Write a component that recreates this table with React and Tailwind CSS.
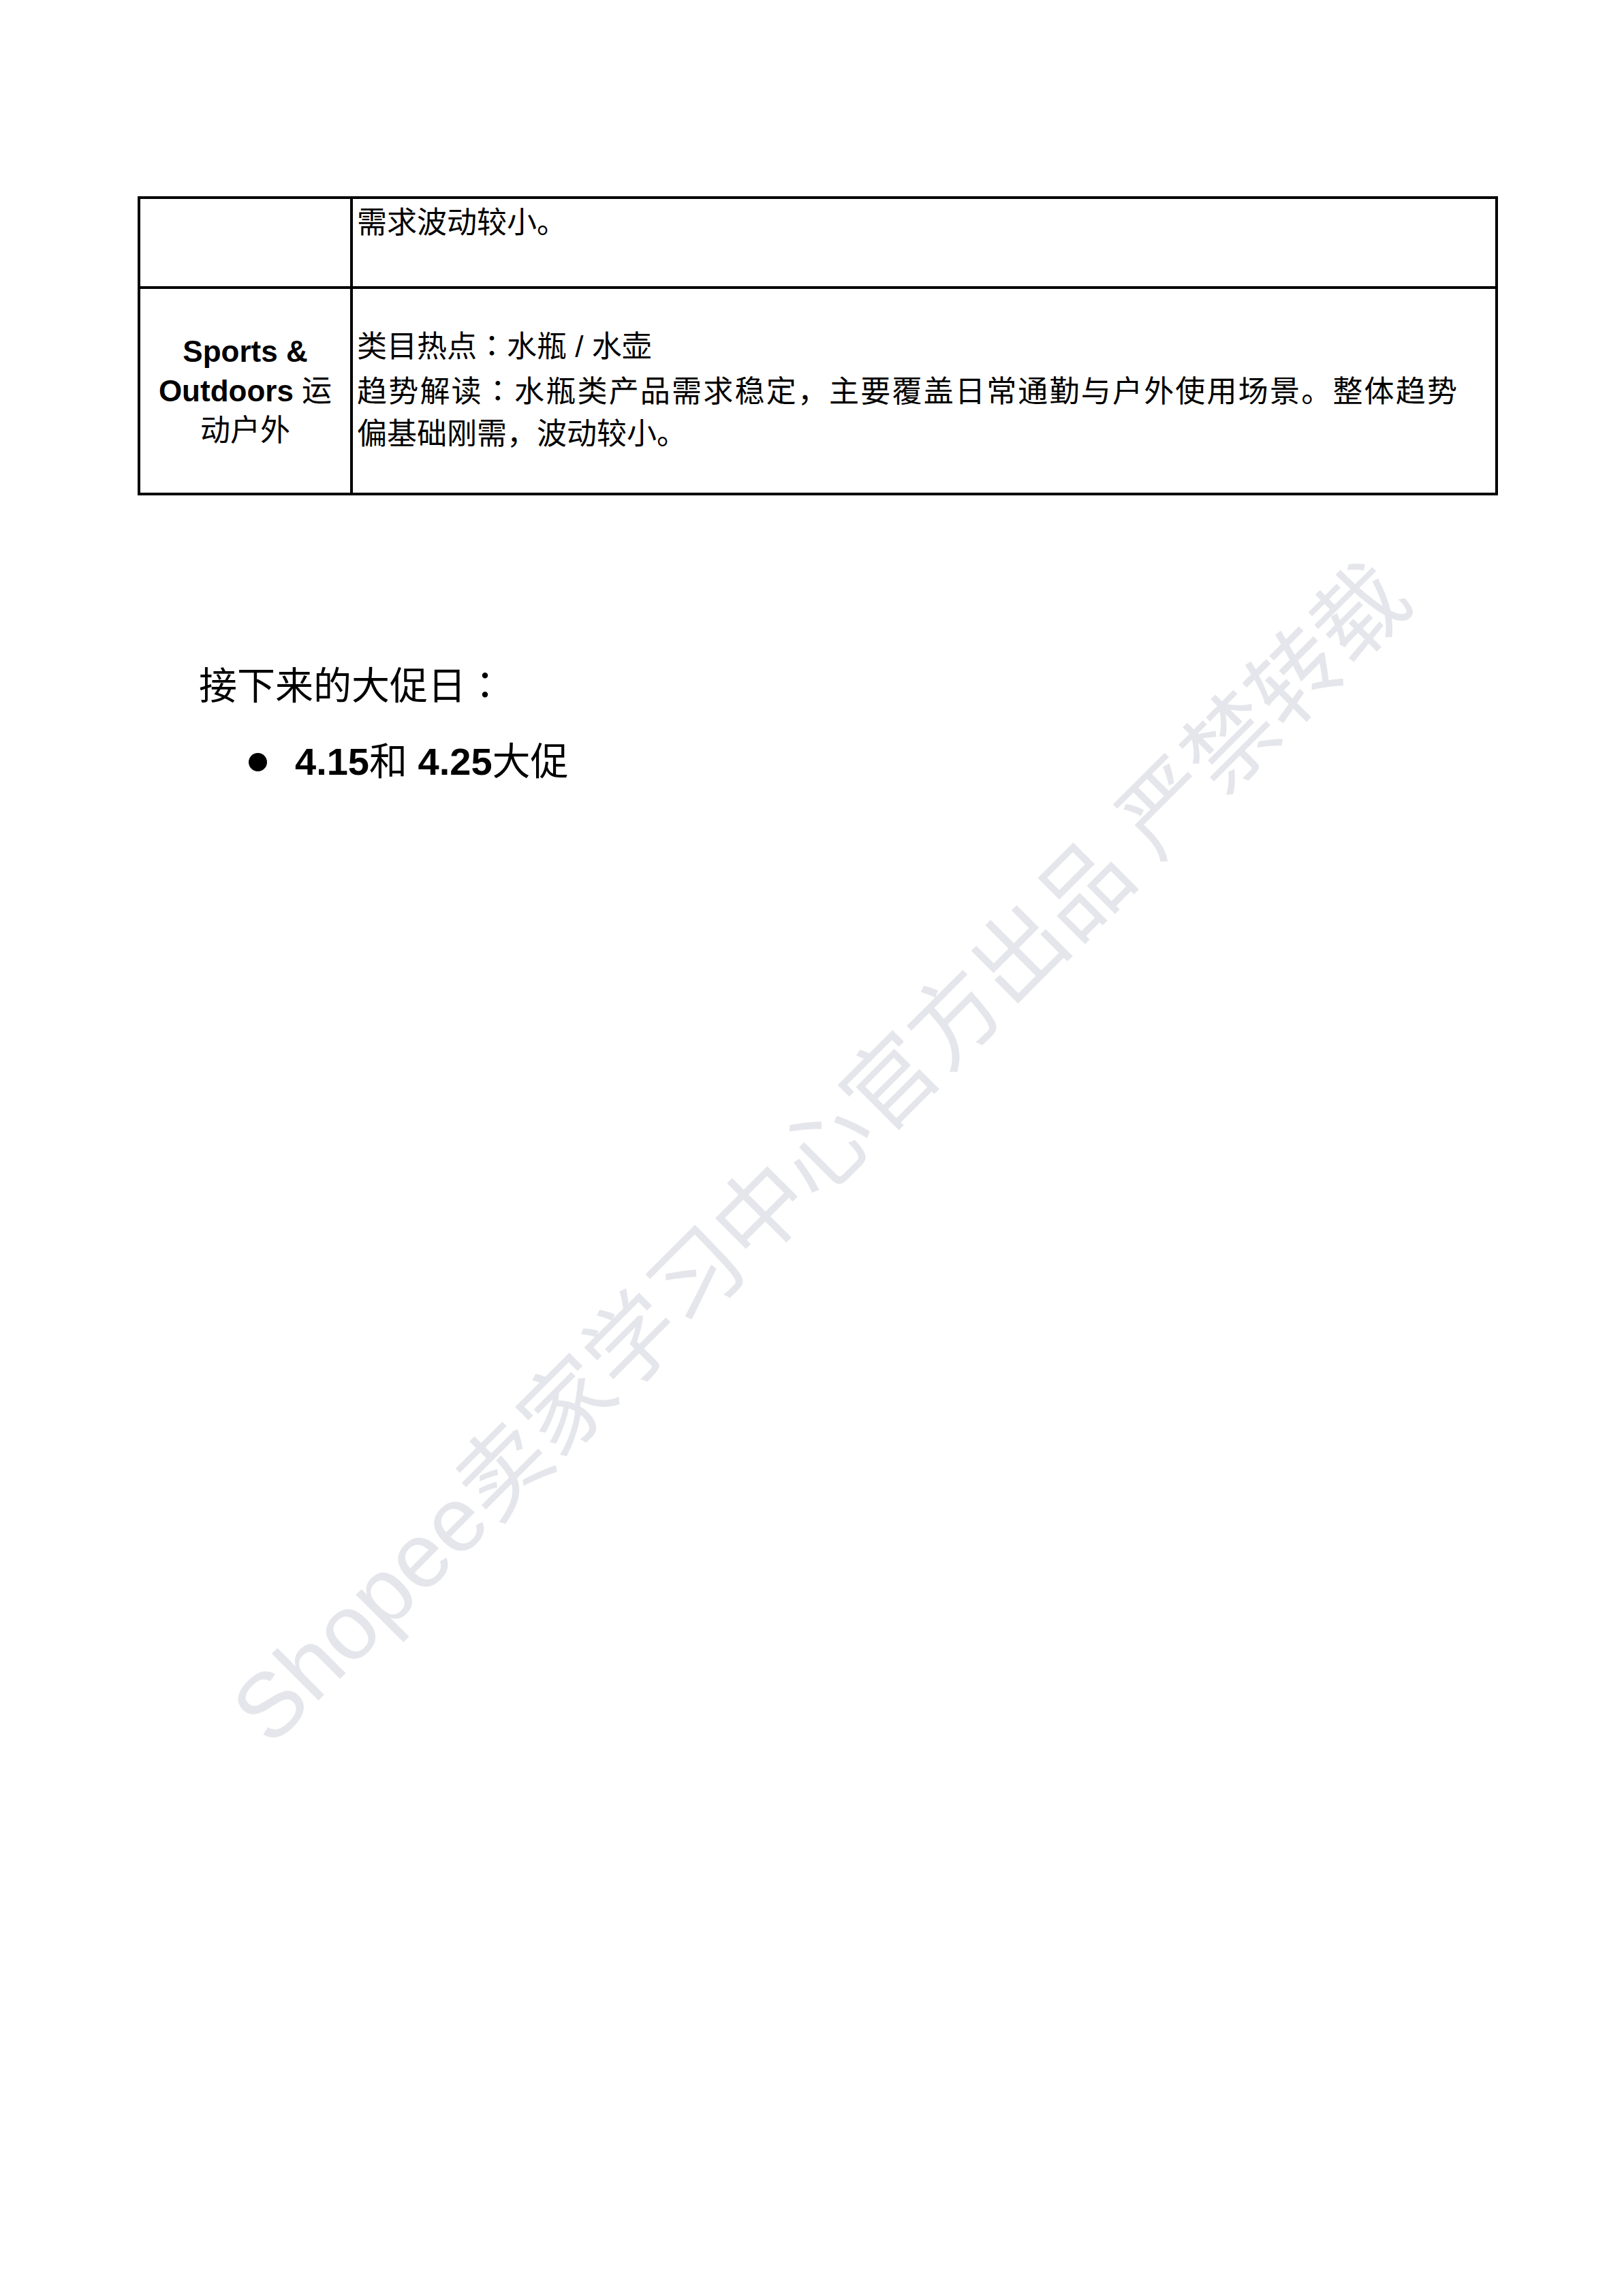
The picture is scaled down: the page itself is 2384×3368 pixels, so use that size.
function Colon() {
  return <span className="font-['Noto_Sans_CJK_TC',sans-serif]">：</span>;
}

export default function App() {
  const font = "font-['Liberation_Sans','Noto_Sans_CJK_SC',sans-serif]";
  return (
    <div className={`relative w-[2384px] h-[3368px] bg-white overflow-hidden text-black ${font}`}>
      <div
        aria-hidden="true"
        className="pointer-events-none absolute left-[1205px] top-[1693px] -translate-x-1/2 -translate-y-1/2 -rotate-45 whitespace-nowrap text-[134px] leading-none text-[#e5e6eb]"
      >
        Shopee卖家学习中心官方出品 严禁转载
      </div>

      <div className="relative pt-[288px] pl-[202px]">
        <div className="w-[1997px] border-4 border-black text-[44px]">
          <div className="grid grid-cols-[312px_1fr] h-[132px] border-b-4 border-black">
            <div className="border-r-4 border-black"></div>
            <div className="pl-[6px] pt-[4px] leading-[62px]">需求波动较小。</div>
          </div>
          <div className="grid grid-cols-[312px_1fr] h-[299px]">
            <div className="border-r-4 border-black flex flex-col justify-center items-center text-center font-bold leading-[58px]">
              <div>Sports &amp;</div>
              <div>
                Outdoors <span className="font-normal">运</span>
              </div>
              <div className="font-normal">动户外</div>
            </div>
            <div className="pl-[6px] pb-[6px] flex flex-col justify-center leading-[62px]">
              <div>
                类目热点<Colon />水瓶 / 水壶
              </div>
              <div className="w-[1615px] text-justify [text-align-last:justify]">
                趋势解读<Colon />水瓶类产品需求稳定，主要覆盖日常通勤与户外使用场景。整体趋势
              </div>
              <div>偏基础刚需，波动较小。</div>
            </div>
          </div>
        </div>

        <div className="mt-[235px] ml-[90px] text-[56px] leading-[80px]">
          接下来的大促日<Colon />
        </div>
        <div className="mt-[31px] ml-[163px] flex items-center text-[56px] leading-[80px]">
          <span className="w-[27px] h-[27px] rounded-full bg-black"></span>
          <span className="ml-[41px]">
            <b>4.15</b>和 <b>4.25</b>大促
          </span>
        </div>
      </div>
    </div>
  );
}
